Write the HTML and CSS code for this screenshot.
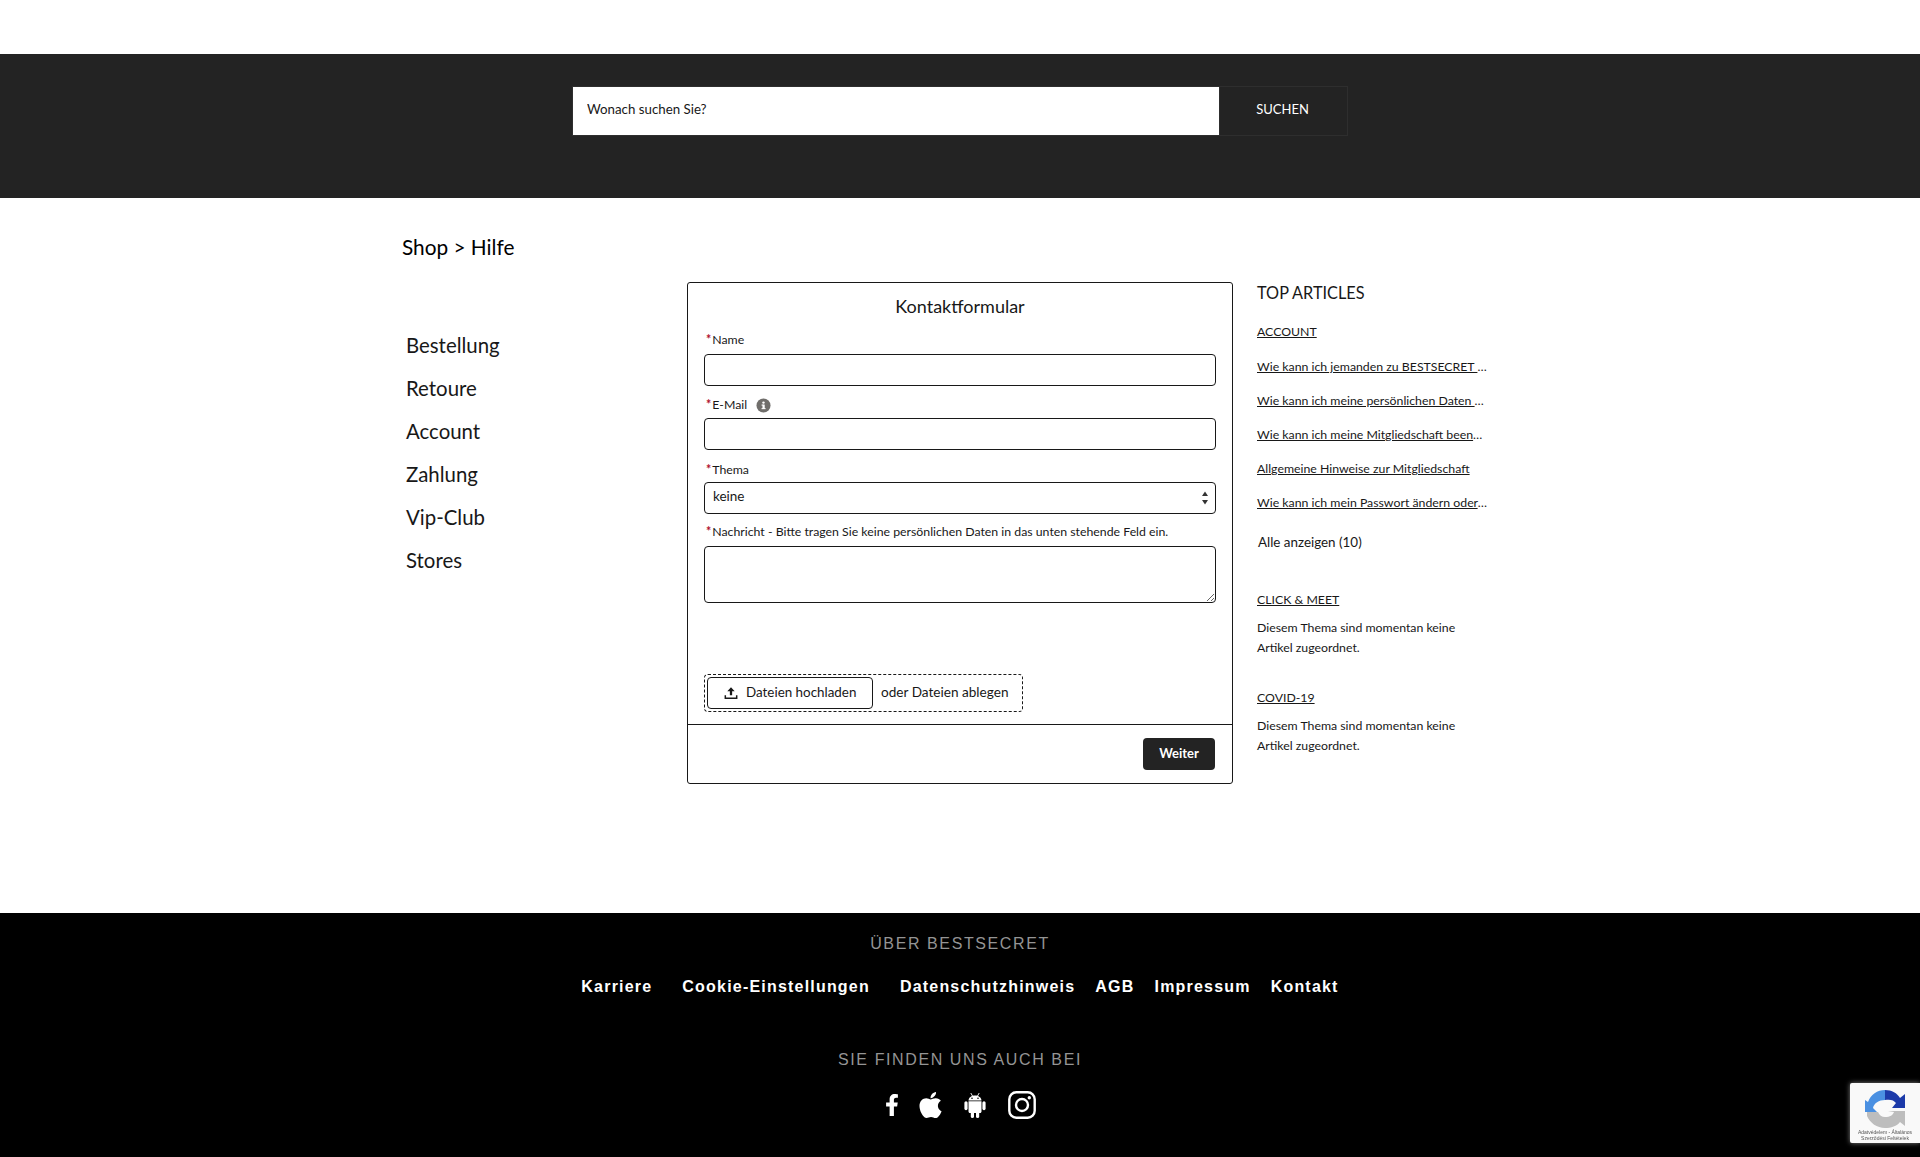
FILE: index.html
```html
<!DOCTYPE html>
<html lang="de">

<head>
    <meta charset="UTF-8">
    <meta name="viewport" content="width=device-width, initial-scale=1.0">
    <title>Shop Hilfe</title>
    <link rel="stylesheet" href="styles.css">
</head>

<body>

    <div class="top-space"></div>

    <!-- Search bar -->
    <div class="search-bar">
        <form class="search-form">
            <input type="text" class="search-input" placeholder="Wonach suchen Sie?">
            <button type="button" class="search-btn"><span>SUCHEN</span></button>
        </form>
    </div>

    <div class="content">
        <div class="breadcrumb">Shop &gt; Hilfe</div>

        <div class="columns">

            <!-- Left: categories -->
            <ul class="category-list">
                <li>Bestellung</li>
                <li>Retoure</li>
                <li>Account</li>
                <li>Zahlung</li>
                <li>Vip-Club</li>
                <li>Stores</li>
            </ul>

            <!-- Middle: contact form -->
            <div class="form-card">
                <form class="form-body">
                    <h2 class="form-title">Kontaktformular</h2>

                    <label class="field-label label-name"><span class="req">*</span>Name</label>
                    <input type="text" class="field-input">

                    <label class="field-label label-mail"><span class="req">*</span>E-Mail
                        <svg class="info-icon" viewBox="0 0 16 16" width="15" height="15">
                            <circle cx="8" cy="8" r="7.5" fill="#706e6b"></circle>
                            <rect x="6.9" y="7" width="2.4" height="4.6" fill="#fff"></rect>
                            <rect x="5.9" y="7" width="2" height="1.1" fill="#fff"></rect>
                            <rect x="5.9" y="10.8" width="4.3" height="1.1" fill="#fff"></rect>
                            <circle cx="8" cy="4.9" r="1.3" fill="#fff"></circle>
                        </svg>
                    </label>
                    <input type="text" class="field-input">

                    <label class="field-label label-topic"><span class="req">*</span>Thema</label>
                    <div class="select-wrap">
                        <select class="field-select">
                            <option>keine</option>
                        </select>
                        <svg class="select-arrows" viewBox="0 0 8 16" width="8" height="16">
                            <path d="M4 1.5 7 6H1z" fill="#333"></path>
                            <path d="M4 14.5 1 10h6z" fill="#333"></path>
                        </svg>
                    </div>

                    <label class="field-label label-msg"><span class="req">*</span>Nachricht - Bitte tragen Sie keine persönlichen Daten in das unten stehende Feld ein.</label>
                    <textarea class="field-textarea"></textarea>

                    <div class="drop-zone">
                        <button type="button" class="upload-btn">
                            <svg viewBox="0 0 16 16" width="14" height="14">
                                <path d="M8 1.5 3.8 6h2.9v4.500h2.600V6h2.900z" fill="#181818"></path>
                                <path d="M1.500 10.500v3.600h13v-3.600" fill="none" stroke="#181818" stroke-width="1.700"></path>
                            </svg>
                            <span>Dateien hochladen</span>
                        </button>
                        <span class="drop-text">oder Dateien ablegen</span>
                    </div>
                </form>
                <div class="form-footer">
                    <button type="button" class="next-btn"><span>Weiter</span></button>
                </div>
            </div>

            <!-- Right: top articles -->
            <div class="articles">
                <h3 class="articles-title">TOP ARTICLES</h3>

                <a class="topic-link topic-first" href="#">ACCOUNT</a>
                <ul class="article-list">
                    <li><a href="#">Wie kann ich jemanden zu BESTSECRET </a> …</li>
                    <li><a href="#">Wie kann ich meine persönlichen Daten </a> …</li>
                    <li><a href="#">Wie kann ich meine Mitgliedschaft been</a>…</li>
                    <li><a href="#">Allgemeine Hinweise zur Mitgliedschaft</a></li>
                    <li><a href="#">Wie kann ich mein Passwort ändern oder</a>…</li>
                </ul>
                <div class="show-all">Alle anzeigen (10)</div>

                <a class="topic-link topic-click" href="#">CLICK &amp; MEET</a>
                <p class="no-articles">Diesem Thema sind momentan keine Artikel zugeordnet.</p>

                <a class="topic-link topic-covid" href="#">COVID-19</a>
                <p class="no-articles">Diesem Thema sind momentan keine Artikel zugeordnet.</p>
            </div>

        </div>
    </div>

    <!-- Footer -->
    <footer class="footer">
        <div class="footer-heading heading-about">ÜBER BESTSECRET</div>
        <div class="footer-links">
            <a class="wide" href="#">Karriere</a>
            <a class="wide" href="#">Cookie-Einstellungen</a>
            <a href="#">Datenschutzhinweis</a>
            <a href="#">AGB</a>
            <a href="#">Impressum</a>
            <a href="#">Kontakt</a>
        </div>
        <div class="footer-heading heading-social">SIE FINDEN UNS AUCH BEI</div>
        <div class="social-icons">
            <svg class="icon-fb" viewBox="0 0 320 512" width="14" height="22">
                <path fill="#fff" d="M279.14 288l14.22-92.66h-88.91v-60.13c0-25.35 12.42-50.06 52.24-50.06h40.42V6.26S260.43 0 225.36 0c-73.22 0-121.08 44.38-121.08 124.72v70.62H22.89V288h81.39v224h100.17V288z"></path>
            </svg>
            <svg class="icon-apple" viewBox="0 0 384 512" width="23" height="30">
                <path fill="#fff" d="M318.7 268.7c-.2-36.7 16.4-64.4 50-84.8-18.8-26.9-47.2-41.7-84.7-44.6-35.5-2.8-74.3 20.7-88.5 20.7-15 0-49.4-19.7-76.4-19.7C63.3 141.2 4 184.8 4 273.5q0 39.3 14.4 81.2c12.8 36.7 59 126.7 107.2 125.2 25.2-.6 43-17.9 75.8-17.9 31.8 0 48.3 17.9 76.4 17.9 48.6-.7 90.4-82.5 102.6-119.3-65.2-30.7-61.7-90-61.7-91.9zm-56.6-164.2c27.3-32.4 24.8-61.9 24-72.5-24.1 1.4-52 16.4-67.9 34.9-17.5 19.8-27.8 44.3-25.6 71.9 26.1 2 49.9-11.4 69.5-34.3z"></path>
            </svg>
            <svg class="icon-android" viewBox="0 0 22 26" width="22" height="26">
                <path fill="#fff" d="M4.500 8.400C4.700 5.400 7.400 3.400 11 3.400s6.300 2 6.500 5z"></path>
                <path d="M6.800 1l1.700 3M15.200 1l-1.700 3" stroke="#fff" stroke-width="0.900"></path>
                <circle cx="8" cy="6.200" r="0.800" fill="#000"></circle>
                <circle cx="14" cy="6.200" r="0.800" fill="#000"></circle>
                <path fill="#fff" d="M4.500 9.300h13v10.200c0 .9-.6 1.500-1.500 1.500H6c-.9 0-1.500-.6-1.500-1.500z"></path>
                <rect x="0.400" y="9.200" width="3.200" height="9" rx="1.600" fill="#fff"></rect>
                <rect x="18.400" y="9.200" width="3.200" height="9" rx="1.600" fill="#fff"></rect>
                <rect x="6.800" y="19" width="3.200" height="7" rx="1.600" fill="#fff"></rect>
                <rect x="12" y="19" width="3.200" height="7" rx="1.600" fill="#fff"></rect>
            </svg>
            <svg class="icon-insta" viewBox="0 0 28 28" width="28" height="28">
                <rect x="1.300" y="1.300" width="25.400" height="25.400" rx="7" fill="none" stroke="#fff" stroke-width="2.400"></rect>
                <circle cx="14" cy="14" r="6" fill="none" stroke="#fff" stroke-width="2.400"></circle>
                <circle cx="21.300" cy="6.700" r="1.700" fill="#fff"></circle>
            </svg>
        </div>
    </footer>

    <!-- reCAPTCHA badge -->
    <div class="captcha-badge">
        <svg class="captcha-logo" viewBox="0 0 40 40" width="40" height="40">
            <path d="M20 2A18 18 0 0 0 3 14l-3-2v12h12l-4-4c1-5 6-8 12-8z" fill="#4a90e2"></path>
            <path d="M20 2c7 0 12 3 15 8l5-4v14H27l4-5c-2-3-6-4-11-3z" fill="#1c3aa9"></path>
            <path d="M2 24h11c1 3 4 5 7 5 5 0 8-2 9-5l-6-1 17 0v15l-5-4c-3 4-9 6-15 6-8 0-15-5-18-12z" fill="#bdbdbd"></path>
        </svg>
        <div class="captcha-text">Adatvédelem - Általános Szerződési Feltételek</div>
    </div>

</body>

</html>
```

FILE: styles.css
```css
body {
    font-family: Lato, 'Noto Sans', sans-serif;
    margin: 0;
    background-color: #fff;
    color: #181818;
}

.top-space {
    height: 54px;
}

/* Search bar */
.search-bar {
    height: 144px;
    padding-top: 32px;
    box-sizing: border-box;
    background-color: #232323;
}

.search-form {
    display: flex;
    width: 776px;
    height: 50px;
    margin: 0 auto;
}

.search-input {
    width: 647px;
    box-sizing: border-box;
    padding: 0 14px 4px;
    border: 1px solid #2e2e2e;
    border-right: none;
    border-radius: 0;
    font-family: inherit;
    font-size: 13.3px;
    background-color: #fff;
}

.search-input::placeholder {
    color: #181818;
    opacity: 1;
}

.search-btn {
    flex: 1;
    padding: 0 2px 4px 0;
    background-color: #232323;
    color: #fff;
    border: 1px solid #2e2e2e;
    font-family: inherit;
    font-size: 13px;
}

/* Main content */
.content {
    height: 715px;
    padding-left: 402px;
    box-sizing: border-box;
}

.breadcrumb {
    padding-top: 35px;
    height: 49px;
    font-size: 20.8px;
    line-height: 28px;
    color: #000;
}

.columns {
    display: flex;
    align-items: flex-start;
}

/* Categories */
.category-list {
    list-style: none;
    width: 285px;
    margin: 0;
    padding: 42px 0 0 4px;
    box-sizing: border-box;
}

.category-list li {
    height: 43px;
    font-size: 20.4px;
    line-height: 43px;
}

/* Contact form */
.form-card {
    width: 546px;
    height: 502px;
    box-sizing: border-box;
    border: 1px solid #181818;
    border-radius: 3px;
    display: flex;
    flex-direction: column;
}

.form-body {
    height: 442px;
    padding: 0 16px;
    display: flex;
    flex-direction: column;
    box-sizing: border-box;
    border-bottom: 1px solid #181818;
}

.form-title {
    margin: 11px 0 1px;
    height: 24px;
    font-size: 18px;
    line-height: 24px;
    font-weight: 400;
    text-align: center;
}

.field-label {
    display: flex;
    align-items: center;
    font-size: 12.3px;
    line-height: 16px;
    height: 16px;
}

.label-name {
    margin-top: 13px;
    margin-bottom: 6px;
}

.label-mail {
    margin-top: 11px;
    margin-bottom: 5px;
}

.label-topic {
    margin-top: 12px;
    margin-bottom: 4px;
}

.label-msg {
    margin-top: 10px;
    margin-bottom: 6px;
}

.req {
    color: #b0102b;
    font-weight: 700;
    margin: 0 1px 0 2px;
}

.info-icon {
    margin-left: 9px;
}

.field-input,
.field-select {
    width: 512px;
    height: 32px;
    box-sizing: border-box;
    border: 1px solid #181818;
    border-radius: 4px;
    background-color: #fff;
    font-family: inherit;
    font-size: 13.5px;
    color: #181818;
}

.select-wrap {
    position: relative;
    height: 32px;
}

.field-select {
    appearance: none;
    padding: 0 8px 4px;
}

.select-arrows {
    position: absolute;
    right: 7px;
    top: 8px;
}

.field-textarea {
    display: block;
    width: 512px;
    height: 57px;
    box-sizing: border-box;
    border: 1px solid #181818;
    border-radius: 4px;
    margin-bottom: 71px;
}

.drop-zone {
    display: flex;
    align-items: center;
    width: 319px;
    height: 38px;
    box-sizing: border-box;
    padding-left: 2px;
    border: 1px dashed #181818;
    border-radius: 4px;
}

.upload-btn {
    display: flex;
    align-items: center;
    gap: 8px;
    width: 166px;
    height: 32px;
    padding: 0 0 0 16px;
    box-sizing: border-box;
    background-color: #fff;
    border: 1px solid #181818;
    border-radius: 4px;
    font-family: inherit;
    font-size: 13.4px;
    color: #181818;
}

.upload-btn span {
    margin-top: -3px;
}

.drop-text {
    margin: -3px 0 0 8px;
    font-size: 13.6px;
}

.form-footer {
    display: flex;
    justify-content: flex-end;
    padding: 13px 17px 0 0;
}

.next-btn {
    width: 72px;
    height: 32px;
    padding: 0 0 3px;
    background-color: #232323;
    color: #fff;
    border: none;
    border-radius: 4px;
    font-family: inherit;
    font-size: 13px;
    font-weight: 700;
}

/* Top articles */
.articles {
    width: 232px;
    margin-left: 24px;
    font-size: 12.3px;
}

.articles-title {
    margin: 0;
    padding-top: 1px;
    font-size: 16.3px;
    line-height: 20px;
    font-weight: 400;
}

.articles a {
    color: #181818;
}

.topic-link {
    display: block;
    font-size: 12.3px;
    line-height: 16px;
}

.topic-first {
    margin-top: 21px;
}

.article-list {
    list-style: none;
    margin: 10px 0 0;
    padding: 0;
}

.article-list li {
    height: 34px;
    line-height: 34px;
    white-space: nowrap;
}

.show-all {
    margin-top: 14px;
    padding-left: 1px;
    font-size: 13.4px;
    line-height: 16px;
}

.topic-click {
    margin-top: 42px;
}

.topic-covid {
    margin-top: 32px;
}

.no-articles {
    margin: 10px 0 0;
    line-height: 20px;
    width: 210px;
}

/* Footer */
.footer {
    height: 244px;
    box-sizing: border-box;
    padding-top: 22px;
    background-color: #000;
    text-align: center;
    font-family: 'Liberation Sans', Arial, sans-serif;
}

.footer-heading {
    color: #949494;
    font-size: 16px;
    line-height: 18px;
    letter-spacing: 1.6px;
}

.footer-links {
    display: flex;
    justify-content: center;
    gap: 20px;
    margin-top: 25px;
    line-height: 18px;
}

.footer-links a {
    color: #fff;
    font-size: 16px;
    font-weight: 700;
    letter-spacing: 1.2px;
    text-decoration: none;
}

.footer-links a.wide {
    margin-right: 10px;
}

.heading-social {
    margin-top: 55px;
}

.social-icons {
    display: flex;
    justify-content: center;
    align-items: center;
    margin-top: 21px;
}

.icon-apple {
    margin-left: 20px;
}

.icon-android {
    margin-left: 22px;
}

.icon-insta {
    margin-left: 22px;
}

/* reCAPTCHA badge sits over the footer */
.captcha-badge {
    position: fixed;
    right: 0;
    bottom: 14px;
    width: 70px;
    height: 60px;
    background-color: #f9f9f9;
    border-radius: 2px 0 0 2px;
    box-shadow: 0 0 5px #808080;
    text-align: center;
}

.captcha-logo {
    display: block;
    margin: 5px auto 0;
}

.captcha-text {
    font-family: 'Liberation Sans', Arial, sans-serif;
    font-size: 5px;
    line-height: 6px;
    color: #555;
    margin-top: 1px;
}
```
